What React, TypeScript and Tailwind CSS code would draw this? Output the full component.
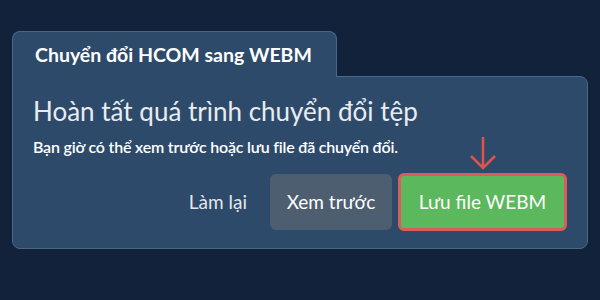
export default function App() {
  return (
    <div
      className="w-[600px] h-[300px] bg-[#12223a] pt-[31px] px-3"
      style={{ fontFamily: 'Lato, "Noto Sans", sans-serif' }}
    >
      {/* Tab */}
      <div className="relative z-10 w-[325px] h-[46px] -mb-px bg-[#2d4a6a] border border-b-0 border-[#4b6888] rounded-t-lg flex items-center pl-[22px]">
        <span className="text-white font-bold text-[19.5px]">Chuyển đổi HCOM sang WEBM</span>
      </div>

      {/* Panel */}
      <div className="bg-[#2d4a6a] border border-[#4b6888] rounded-b-lg rounded-tr-lg px-5 pt-[18px] pb-[17px]">
        <h1 className="text-[#e8ecf0] text-[26px] leading-[32px]">Hoàn tất quá trình chuyển đổi tệp</h1>
        <p className="text-white font-semibold text-[16px] leading-[20px] mt-[10px] tracking-[-0.2px]">
          Bạn giờ có thể xem trước hoặc lưu file đã chuyển đổi.
        </p>

        <div className="flex justify-end items-center mt-4">
          <button className="h-[56px] pr-[23px] text-[#e3e7ec] text-[19px]">Làm lại</button>
          <button className="h-[56px] w-[122px] rounded-md bg-[#4d5e70] text-white text-[19px] mr-[6px]">Xem trước</button>
          <div className="relative">
            <svg
              className="absolute left-1/2 -translate-x-1/2 -top-[37px]"
              width="30"
              height="34"
              viewBox="0 0 30 34"
              fill="none"
              stroke="#e0534c"
              strokeWidth="2.5"
            >
              <path d="M15 1 V32" />
              <path d="M3 20 L15 32 L27 20" />
            </svg>
            <button className="h-[58px] w-[169px] rounded-md border-[3px] border-[#de5c57] bg-[#5cb85c] text-white text-[19px]">
              Lưu file WEBM
            </button>
          </div>
        </div>
      </div>
    </div>
  );
}
